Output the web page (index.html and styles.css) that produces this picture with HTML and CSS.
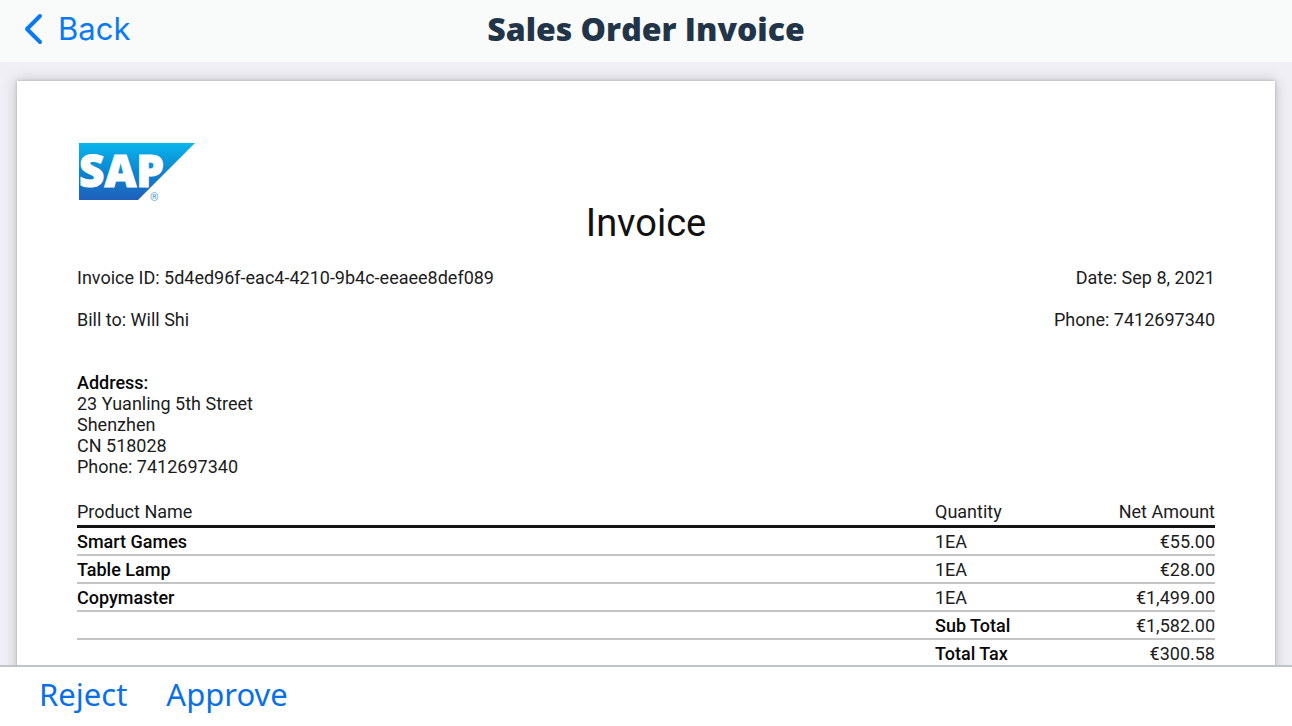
FILE: index.html
```html
<!DOCTYPE html>
<html lang="en">
<head>
<meta charset="utf-8">
<meta name="viewport" content="width=device-width, initial-scale=1">
<title>Sales Order Invoice</title>
<link rel="stylesheet" href="styles.css">
</head>
<body>
<div class="app">
  <header class="navbar">
    <button class="back" type="button">
      <svg class="chevron" viewBox="0 0 20 32" aria-hidden="true"><path d="M16 3 3 16 16 29"/></svg>
      <span>Back</span>
    </button>
    <h1 class="title">Sales Order Invoice</h1>
  </header>

  <main class="viewer">
    <article class="paper">
      <svg class="logo" viewBox="0 0 118 60">
        <defs>
          <linearGradient id="fade" x1="0" y1="0" x2="0" y2="1">
            <stop offset="0" stop-color="#08b6ec"/>
            <stop offset="0.5" stop-color="#0b86d0"/>
            <stop offset="1" stop-color="#1f5fbb"/>
          </linearGradient>
        </defs>
        <path d="M2 2H118L61 59H2Z" fill="url(#fade)"/>
        <text class="logo-name" x="2" y="46">SAP</text>
        <text class="logo-mark" x="73" y="60">®</text>
      </svg>

      <h2 class="heading">Invoice</h2>

      <div class="facts">
        <span>Invoice ID: 5d4ed96f-eac4-4210-9b4c-eeaee8def089</span>
        <span>Date: Sep 8, 2021</span>
      </div>
      <div class="facts">
        <span>Bill to: Will Shi</span>
        <span>Phone: 7412697340</span>
      </div>

      <address class="address">
        <strong>Address:</strong><br>
        23 Yuanling 5th Street<br>
        Shenzhen<br>
        CN 518028<br>
        Phone: 7412697340
      </address>

      <table class="items">
        <colgroup><col><col class="col-value"><col class="col-value"></colgroup>
        <thead>
          <tr><th scope="col">Product Name</th><th scope="col">Quantity</th><th scope="col">Net Amount</th></tr>
        </thead>
        <tbody>
          <tr><td class="strong">Smart Games</td><td>1EA</td><td>€55.00</td></tr>
          <tr><td class="strong">Table Lamp</td><td>1EA</td><td>€28.00</td></tr>
          <tr><td class="strong">Copymaster</td><td>1EA</td><td>€1,499.00</td></tr>
          <tr><td></td><td class="strong">Sub Total</td><td>€1,582.00</td></tr>
          <tr><td></td><td class="strong">Total Tax</td><td>€300.58</td></tr>
        </tbody>
      </table>
    </article>
  </main>

  <footer class="toolbar">
    <button class="action" type="button">Reject</button>
    <button class="action" type="button">Approve</button>
  </footer>
</div>
</body>
</html>
```
FILE: styles.css
```css
* {
  box-sizing: border-box;
}

body {
  margin: 0;
  font-family: Roboto, "Liberation Sans", sans-serif;
  color: #1c1c1c;
}

button {
  border: 0;
  padding: 0;
  background: none;
  color: #0a70e8;
  cursor: pointer;
}

.app {
  display: flex;
  flex-direction: column;
  height: 100vh;
}

.navbar {
  display: grid;
  grid-template-columns: 1fr auto 1fr;
  align-items: center;
  padding: 7px 24px 11px;
  background: #f9fafa;
}

.back {
  display: flex;
  align-items: center;
  gap: 14px;
  justify-self: start;
  color: #0b7af0;
  font: 31px/44px Inter, "Liberation Sans", sans-serif;
}

.chevron {
  width: 20px;
  height: 32px;
  fill: none;
  stroke: currentColor;
  stroke-width: 4;
  stroke-linecap: round;
  stroke-linejoin: round;
}

.title {
  margin: 0;
  color: #223548;
  font: 800 32px/44px "Open Sans", "Noto Sans", sans-serif;
}

.viewer {
  flex: 1;
  min-height: 0;
  overflow: hidden;
  padding: 19px 17px 0;
  background: #f0eff5;
}

.paper {
  min-height: 100%;
  padding: 60px;
  background: #fff;
  box-shadow: 0 0 3px #aaa, 0 0 14px rgba(0, 0, 0, 0.2);
}

.logo {
  display: block;
  width: 118px;
  height: 60px;
}

.logo-name {
  fill: #fff;
  stroke: #fff;
  stroke-width: 1;
  font: 800 44px "Open Sans", "Noto Sans", sans-serif;
}

.logo-mark {
  fill: #4f9bd6;
  font: 11px Roboto, "Liberation Sans", sans-serif;
}

.heading {
  margin: 0 0 22px;
  color: #111;
  font-size: 38px;
  font-weight: 400;
  line-height: 44px;
  text-align: center;
}

.facts {
  display: flex;
  justify-content: space-between;
  margin-bottom: 21px;
  font-size: 18px;
  line-height: 21px;
}

.address {
  margin: 42px 0 24px;
  font-size: 18px;
  font-style: normal;
  line-height: 21px;
}

.address strong,
.strong {
  font-weight: 500;
  color: #080808;
}

.items {
  width: 100%;
  border-collapse: separate;
  border-spacing: 0;
  table-layout: fixed;
  font-size: 18px;
  line-height: 21px;
}

.col-value {
  width: 140px;
}

.items th {
  padding: 0 0 3px;
  border-bottom: 3px solid #151515;
  font-weight: 400;
  text-align: left;
}

.items td {
  height: 28px;
  padding: 3px 0 2px;
  border-bottom: 2px solid #c4c4c4;
}

.items th:last-child,
.items td:last-child {
  text-align: right;
}

.toolbar {
  display: flex;
  gap: 39px;
  padding: 5px 39px 10px;
  border-top: 2px solid #bfc5cb;
  background: #fff;
}

.action {
  font: 31px/44px "Noto Sans", "Open Sans", sans-serif;
}
```
